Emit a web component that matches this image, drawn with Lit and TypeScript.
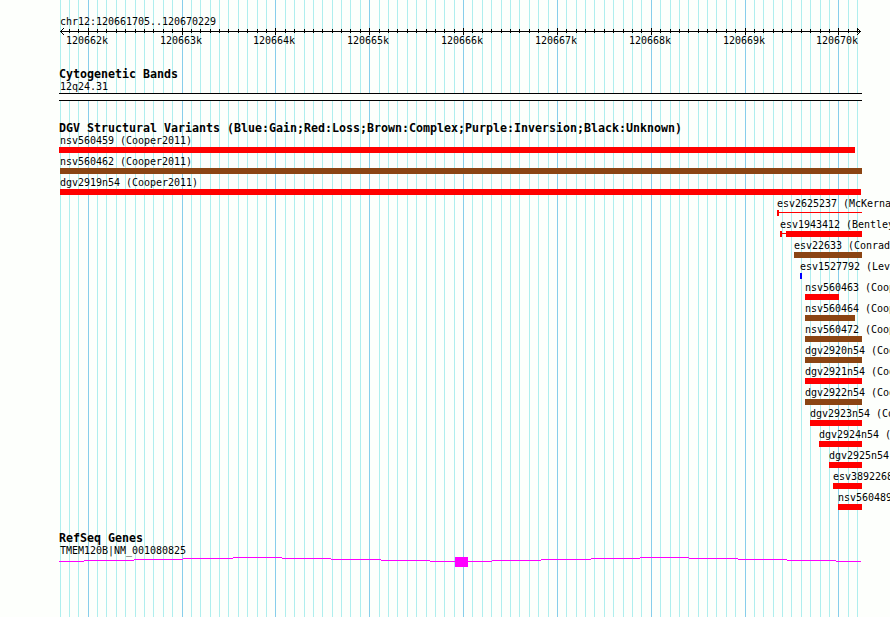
import { LitElement, html, svg, css } from "lit";
import { customElement } from "lit/decorators.js";
import { styleMap } from "lit/directives/style-map.js";

const START = 120661705;
const END = 120670229;
const LEFT = 60;
const SCALE = 800 / (END - START + 1);
const toX = (bp: number) => Math.round(LEFT + (bp - START) * SCALE);

const TICKS: { x: number; major: boolean; bp: number }[] = [];
for (let bp = 120661700; bp <= END; bp += 100) {
  TICKS.push({ x: toX(bp), major: bp % 1000 === 0, bp });
}

const RED = "#ff0000";
const BROWN = "#8b4513";
const BLUE = "#0000ff";

interface Part { w: number; thin?: boolean }
interface Variant { name: string; label: number; x: number; color: string; parts: Part[] }
const v = (name: string, label: number, x: number, color: string, ...parts: Part[]): Variant =>
  ({ name, label, x, color, parts });

const VARIANTS: Variant[] = [
  v("nsv560459 (Cooper2011)", 60, 59, RED, { w: 796 }),
  v("nsv560462 (Cooper2011)", 60, 60, BROWN, { w: 802 }),
  v("dgv2919n54 (Cooper2011)", 60, 60, RED, { w: 801 }),
  v("esv2625237 (McKerna", 777, 777, RED, { w: 2 }, { w: 83, thin: true }),
  v("esv1943412 (Bentley", 780, 780, RED, { w: 2 }, { w: 4, thin: true }, { w: 76 }),
  v("esv22633 (Conrad", 794, 794, BROWN, { w: 68 }),
  v("esv1527792 (Lev", 800, 800, BLUE, { w: 2 }),
  v("nsv560463 (Coop", 805, 805, RED, { w: 34 }),
  v("nsv560464 (Coop", 805, 805, BROWN, { w: 50 }),
  v("nsv560472 (Coop", 805, 805, BROWN, { w: 57 }),
  v("dgv2920n54 (Coo", 805, 805, BROWN, { w: 57 }),
  v("dgv2921n54 (Coo", 805, 805, RED, { w: 57 }),
  v("dgv2922n54 (Coo", 805, 805, BROWN, { w: 57 }),
  v("dgv2923n54 (Co", 810, 810, RED, { w: 52 }),
  v("dgv2924n54 (", 819, 819, RED, { w: 43 }),
  v("dgv2925n54", 829, 829, RED, { w: 33 }),
  v("esv3892268", 833, 833, RED, { w: 29 }),
  v("nsv560489", 838, 838, RED, { w: 24 }),
];

// Intron line segments: [x start, x end, y inside the gene glyph]
const INTRONS = [
  [59, 84, 4], [84, 134, 3], [134, 183, 2], [183, 233, 1], [233, 282, 0],
  [282, 331, 1], [331, 381, 2], [381, 430, 3], [430, 455, 4],
  [468, 492, 4], [492, 541, 3], [541, 591, 2], [591, 640, 1], [640, 689, 0],
  [689, 738, 1], [738, 787, 2], [787, 836, 3], [836, 861, 4],
];

@customElement("genome-ruler")
export class GenomeRuler extends LitElement {
  static styles = css`
    :host { display: block; height: 47px; padding-top: 15px; box-sizing: border-box; }
    .region { height: 13px; line-height: 13px; padding-left: 60px; }
    svg { display: block; height: 7px; width: 890px; }
    .numbers { display: grid; grid-template-columns: 100%; line-height: 13px; margin-top: -1px; }
    .number { grid-area: 1 / 1; }
  `;
  render() {
    return html`
      <div class="region">chr12:120661705..120670229</div>
      <svg viewBox="0 0 890 7" shape-rendering="crispEdges">
        <rect x="60" y="3" width="801" height="1" />
        ${TICKS.slice(1).map((t) => t.major
          ? svg`<rect x=${t.x} y="0" width="1" height="7" />`
          : svg`<rect x=${t.x} y="1" width="1" height="4" />`)}
        ${[1, 2, 3].map((d) => svg`
          <rect x=${60 + d} y=${3 - d} width="1" height="1" />
          <rect x=${60 + d} y=${3 + d} width="1" height="1" />
          <rect x=${860 - d} y=${3 - d} width="1" height="1" />
          <rect x=${860 - d} y=${3 + d} width="1" height="1" />`)}
      </svg>
      <div class="numbers">
        ${TICKS.filter((t) => t.major).map((t) => html`
          <span class="number" style=${styleMap({ marginLeft: `${t.x - 22}px` })}>${t.bp / 1000}k</span>`)}
      </div>`;
  }
}

@customElement("variant-row")
export class VariantRow extends LitElement {
  static properties = { variant: { attribute: false } };
  declare variant: Variant;
  static styles = css`
    :host { display: block; height: 21px; }
    .label { height: 13px; line-height: 13px; white-space: pre; }
    .bar { display: flex; height: 6px; }
    .part { flex: none; height: 6px; }
    .thin { height: 1px; margin-top: 2px; }
  `;
  render() {
    const r = this.variant;
    return html`
      <div class="label" style=${styleMap({ marginLeft: `${r.label}px` })}>${r.name}</div>
      <div class="bar" style=${styleMap({ marginLeft: `${r.x}px` })}>
        ${r.parts.map((p) => html`<div class=${p.thin ? "part thin" : "part"}
          style=${styleMap({ width: `${p.w}px`, background: r.color })}></div>`)}
      </div>`;
  }
}

@customElement("app-root")
export class AppRoot extends LitElement {
  static styles = css`
    :host {
      display: block; position: relative; width: 890px; height: 617px; overflow: hidden;
      background: #fdfffc; color: #000;
      font-family: "DejaVu Sans Mono", monospace; font-size: 10px; letter-spacing: -0.02px;
    }
    .grid { position: absolute; inset: 0; width: 890px; height: 617px; }
    .tracks { position: relative; display: flex; flex-direction: column; }
    h2 {
      margin: 0; padding-left: 59px; height: 13px; line-height: 14px; white-space: pre;
      font-size: 11.63px; font-weight: bold; letter-spacing: 0;
    }
    .name { height: 13px; line-height: 13px; padding-left: 60px; }
    .cytobands { margin-top: 20px; }
    .band {
      box-sizing: border-box; width: 803px; height: 8px; margin-left: 59px;
      border: solid #000; border-width: 1px 0; background: #fdfffc;
    }
    .variants { margin-top: 20px; }
    .genes { margin-top: 19px; }
    .gene { display: block; width: 890px; height: 11px; }
  `;
  render() {
    return html`
      <svg class="grid" viewBox="0 0 890 617" shape-rendering="crispEdges">
        ${TICKS.map((t) => svg`<rect x=${t.x} y="0" width="1" height="617"
          fill=${t.major ? "#87ceeb" : "#afeeee"} />`)}
      </svg>
      <div class="tracks">
        <genome-ruler></genome-ruler>
        <section class="cytobands">
          <h2>Cytogenetic Bands</h2>
          <div class="name">12q24.31</div>
          <div class="band"></div>
        </section>
        <section class="variants">
          <h2>DGV Structural Variants (Blue:Gain;Red:Loss;Brown:Complex;Purple:Inversion;Black:Unknown)</h2>
          ${VARIANTS.map((r) => html`<variant-row .variant=${r}></variant-row>`)}
        </section>
        <section class="genes">
          <h2>RefSeq Genes</h2>
          <div class="name">TMEM120B|NM_001080825</div>
          <svg class="gene" viewBox="0 0 890 11" shape-rendering="crispEdges" fill="#ff00ff">
            ${INTRONS.map(([a, b, y]) => svg`<rect x=${a} y=${y} width=${b - a} height="1" />`)}
            <rect x="455" y="0" width="13" height="10" />
          </svg>
        </section>
      </div>`;
  }
}
